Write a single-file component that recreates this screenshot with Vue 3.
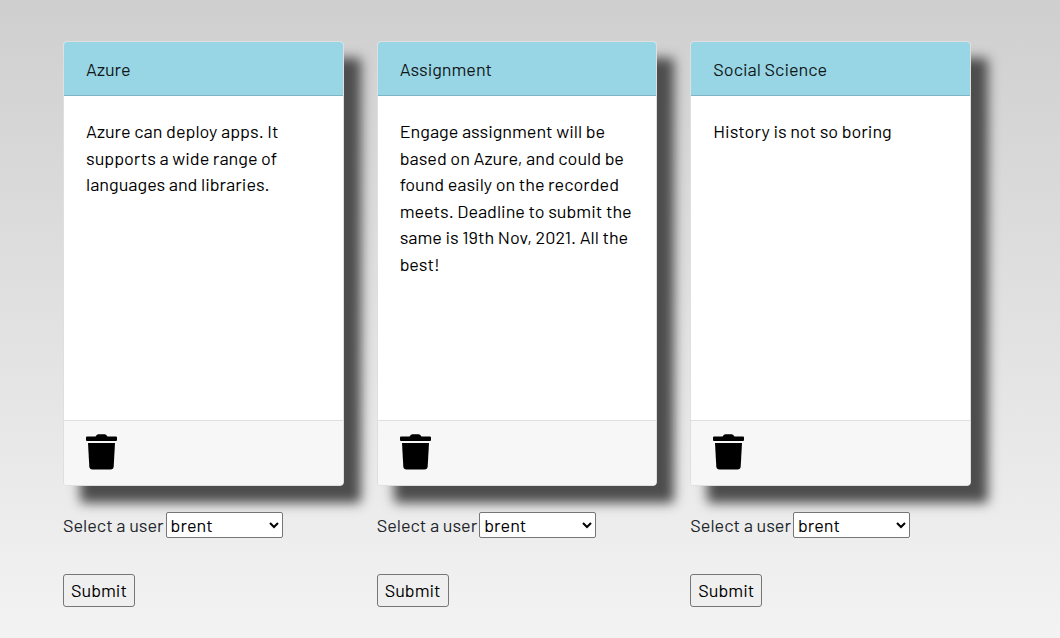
<script setup>
import { ref } from 'vue'

const users = ['brent']

const notes = ref([
  {
    id: 1,
    title: 'Azure',
    text: 'Azure can deploy apps. It supports a wide range of languages and libraries.',
    user: 'brent',
  },
  {
    id: 2,
    title: 'Assignment',
    text: 'Engage assignment will be based on Azure, and could be found easily on the recorded meets. Deadline to submit the same is 19th Nov, 2021. All the best!',
    user: 'brent',
  },
  {
    id: 3,
    title: 'Social Science',
    text: 'History is not so boring',
    user: 'brent',
  },
])
</script>

<template>
  <main class="page">
    <section v-for="note in notes" :key="note.id" class="note">
      <article class="card">
        <header class="card-header">{{ note.title }}</header>
        <p class="card-body">{{ note.text }}</p>
        <footer class="card-footer">
          <button type="button" class="trash" aria-label="Delete note">
            <svg viewBox="0 0 31 36" width="31" height="36" aria-hidden="true">
              <path d="M1 2.500h8.500L11 .8Q11.500.2 12.500.2h6Q19.500.2 20 .8L21.500 2.500H30q1 0 1 1V6q0 1-1 1H1Q0 7 0 6V3.500q0-1 1-1Z" />
              <path d="M2 9h27l-1.300 23.500Q27.500 35.500 24.500 35.500h-18Q3.500 35.500 3.300 32.500Z" />
            </svg>
          </button>
        </footer>
      </article>
      <form class="share" @submit.prevent>
        <div class="field">
          <label :for="'user-' + note.id">Select a user</label>
          <select :id="'user-' + note.id" v-model="note.user">
            <option v-for="user in users" :key="user">{{ user }}</option>
          </select>
        </div>
        <button type="submit" class="submit">Submit</button>
      </form>
    </section>
  </main>
</template>

<style>
body {
  margin: 0;
}
</style>

<style scoped>
.page {
  box-sizing: border-box;
  min-height: 100vh;
  display: grid;
  grid-template-columns: repeat(3, 1fr);
  align-items: start;
  gap: 33px;
  padding: 41px 89px 31px 63px;
  background: linear-gradient(#cfcfcf, #f3f3f3);
  color: #212529;
  font-family: Barlow, Roboto, "Liberation Sans", sans-serif;
  font-size: 18px;
  line-height: 1.47;
}

.card {
  box-sizing: border-box;
  min-height: 445px;
  display: flex;
  flex-direction: column;
  border: 1px solid #dfdfdf;
  border-radius: 4px;
  background: #fff;
  color: #000;
  box-shadow: 17px 17px 12px #4d4d4d;
}

.card-header {
  padding: 14px 22px 13px;
  border-bottom: 1px solid #7fb5c3;
  border-radius: 3px 3px 0 0;
  background: #99d6e5;
  color: #101719;
}

.card-body {
  flex: 1;
  margin: 0;
  padding: 22px;
}

.card-footer {
  padding: 13px 22px 15px;
  border-top: 1px solid #dfdfdf;
  border-radius: 0 0 3px 3px;
  background: #f7f7f7;
}

.trash {
  display: block;
  padding: 0;
  border: 0;
  background: none;
  color: #000;
  cursor: pointer;
}

.trash svg {
  display: block;
  fill: currentColor;
}

.share {
  margin-top: 26px;
}

.field {
  display: flex;
  align-items: center;
  gap: 2px;
}

select {
  box-sizing: border-box;
  width: 117px;
  height: 26px;
  border: 1px solid #767676;
  border-radius: 2px;
  background-color: #fff;
  color: #000;
  font: inherit;
}

.submit {
  box-sizing: border-box;
  height: 33px;
  margin-top: 36px;
  padding: 0 7px 1px;
  border: 1px solid #767676;
  border-radius: 3px;
  background: #efefef;
  color: #000;
  font: inherit;
}
</style>
